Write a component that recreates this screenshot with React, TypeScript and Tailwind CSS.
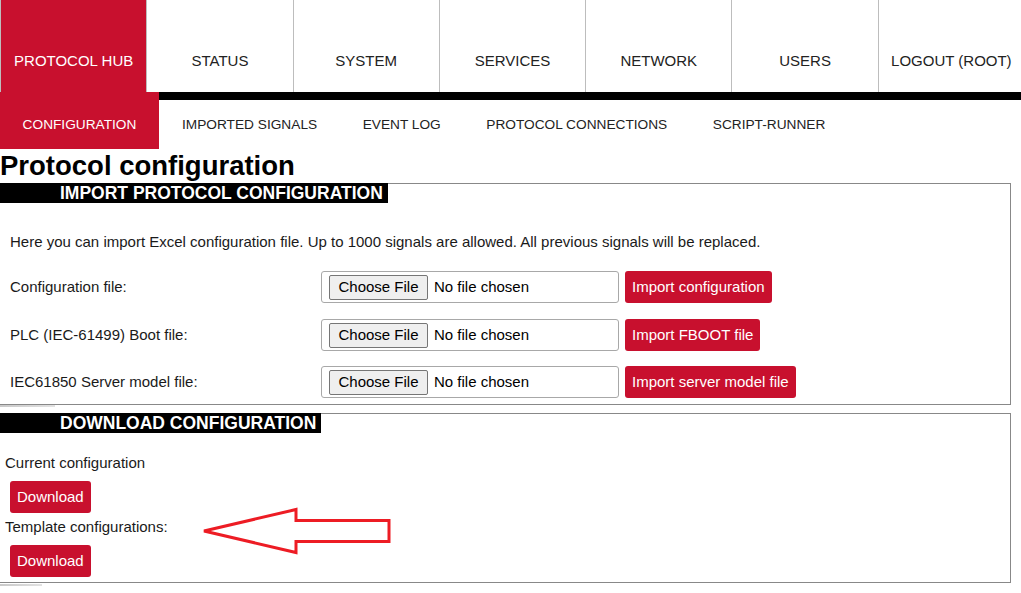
import React from "react";

const topItems = ["PROTOCOL HUB", "STATUS", "SYSTEM", "SERVICES", "NETWORK", "USERS", "LOGOUT (ROOT)"];
const subItems = ["IMPORTED SIGNALS", "EVENT LOG", "PROTOCOL CONNECTIONS", "SCRIPT-RUNNER"];

function FileBox() {
  return (
    <div className="w-[298px] h-[32px] border border-[#a8a8a8] rounded-[3px] flex items-center pl-[7px] bg-white">
      <div className="w-[99px] h-[25px] bg-[#efefef] border border-[#767676] rounded-[2px] flex items-center justify-center text-[15px] text-black">
        Choose File
      </div>
      <span className="ml-[6px] text-[15px] text-black">No file chosen</span>
    </div>
  );
}

function RedButton({ children, className = "" }: { children: React.ReactNode; className?: string }) {
  return (
    <div className={"h-[32px] px-[7px] rounded-[3px] bg-[#C8102E] text-white text-[15px] flex items-center whitespace-nowrap " + className}>
      {children}
    </div>
  );
}

function Legend({ children }: { children: React.ReactNode }) {
  return (
    <div className="-mt-px h-[20px] bg-black text-white font-bold text-[17.5px] leading-[20px] pl-[60px] pr-[5px] self-start whitespace-nowrap [text-shadow:0_0_1px_#000]">
      {children}
    </div>
  );
}

export default function App() {
  const rows = [
    { label: "Configuration file:", btn: "Import configuration", mt: "mt-[20px]" },
    { label: "PLC (IEC-61499) Boot file:", btn: "Import FBOOT file", mt: "mt-[16px]" },
    { label: "IEC61850 Server model file:", btn: "Import server model file", mt: "mt-[15px]" },
  ];
  return (
    <div className="relative w-[1021px] h-[593px] overflow-hidden bg-white text-[#1a1a1a] font-['Liberation_Sans',Arial,sans-serif]">
      <nav className="grid grid-cols-7 w-[1024px] h-[92px]">
        {topItems.map((t, i) => (
          <div
            key={t}
            className={
              "border-l border-[#bdbdbd] flex items-center justify-center pt-[30px] text-[15px] whitespace-nowrap " +
              (i === 0 ? "bg-[#C8102E] text-white" : "bg-white text-[#222]")
            }
          >
            {t}
          </div>
        ))}
      </nav>
      <div className="flex h-[57px]">
        <div className="w-[159px] bg-[#C8102E] text-white flex items-center justify-center pt-[10px] text-[13.7px]">
          CONFIGURATION
        </div>
        <div className="flex-1 border-t-[8px] border-black flex items-center pl-[23px] pt-[2px] gap-[45.5px] text-[13.7px] text-[#222] whitespace-nowrap">
          {subItems.map((s) => (
            <span key={s}>{s}</span>
          ))}
        </div>
      </div>
      <h1 className="text-[27.5px] font-bold leading-[34px] text-black whitespace-nowrap">Protocol configuration</h1>

      <section className="w-[1011px] border border-l-0 border-[#888] flex flex-col pb-[6px]">
        <Legend>IMPORT PROTOCOL CONFIGURATION</Legend>
        <p className="mt-[30px] pl-[10px] text-[15px] leading-[18px] whitespace-nowrap">
          Here you can import Excel configuration file. Up to 1000 signals are allowed. All previous signals will be replaced.
        </p>
        {rows.map((r) => (
          <div key={r.label} className={"flex items-center " + r.mt}>
            <div className="w-[321px] pl-[10px] text-[15px] whitespace-nowrap">{r.label}</div>
            <FileBox />
            <RedButton className="ml-[6px]">{r.btn}</RedButton>
          </div>
        ))}
      </section>
      <div className="h-[2px] w-[55px] bg-gradient-to-r from-[#c9c9c9] to-[#e2e2e2]" />

      <section className="mt-[6px] w-[1011px] border border-l-0 border-[#888] flex flex-col pb-[5px]">
        <Legend>DOWNLOAD CONFIGURATION</Legend>
        <p className="mt-[21px] pl-[5px] text-[15px] leading-[18px]">Current configuration</p>
        <RedButton className="mt-[9px] ml-[10px] self-start">Download</RedButton>
        <p className="mt-[5px] pl-[5px] text-[15px] leading-[18px]">Template configurations:</p>
        <RedButton className="mt-[9px] ml-[10px] self-start">Download</RedButton>
      </section>
      <div className="mt-px h-[2px] w-[42px] bg-gradient-to-r from-[#c9c9c9] to-[#e2e2e2]" />

      <svg
        className="absolute left-[200px] top-[505px]"
        width="195"
        height="52"
        viewBox="200 505 195 52"
      >
        <polygon
          points="204,531 296,509.5 296,520.5 389,520.5 389,541.5 296,541.5 296,552.5"
          fill="none"
          stroke="#ED1C24"
          strokeWidth="3"
          strokeLinejoin="miter"
        />
      </svg>
    </div>
  );
}
